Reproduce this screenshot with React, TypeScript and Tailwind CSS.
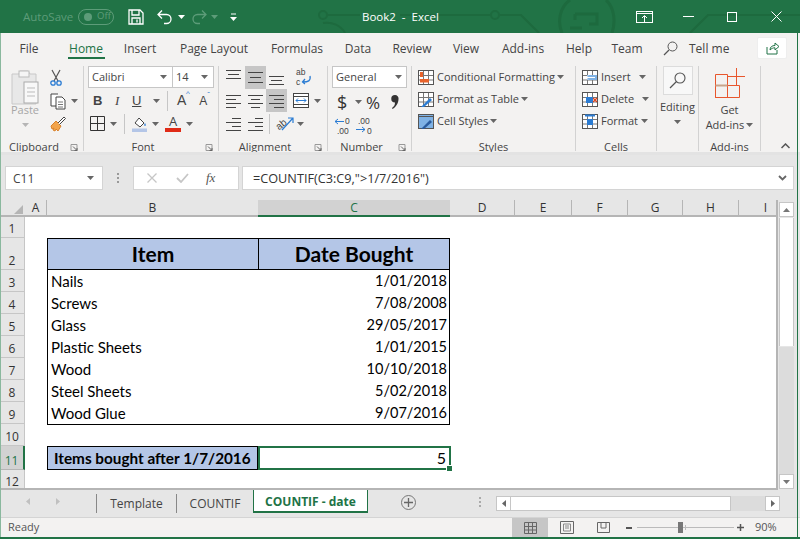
const tabs = [
    {label: "File", cls: "w-[56px]"},
    {label: "Home", cls: "w-[58px]"},
    {label: "Insert", cls: "w-[50px]"},
    {label: "Page Layout", cls: "w-[98px]"},
    {label: "Formulas", cls: "w-[68px]"},
    {label: "Data", cls: "w-[54px]"},
    {label: "Review", cls: "w-[54px]"},
    {label: "View", cls: "w-[54px]"},
    {label: "Add-ins", cls: "w-[60px]"},
    {label: "Help", cls: "w-[52px]"},
    {label: "Team", cls: "w-[44px]"},
];

const columns = [
    {label: "D", cls: "w-[65px]"},
    {label: "E", cls: "w-[57px]"},
    {label: "F", cls: "w-[56px]"},
    {label: "G", cls: "w-[55px]"},
    {label: "H", cls: "w-[56px]"},
];

const items = [
    {row: 3, name: "Nails", date: "1/01/2018"},
    {row: 4, name: "Screws", date: "7/08/2008"},
    {row: 5, name: "Glass", date: "29/05/2017"},
    {row: 6, name: "Plastic Sheets", date: "1/01/2015"},
    {row: 7, name: "Wood", date: "10/10/2018"},
    {row: 8, name: "Steel Sheets", date: "5/02/2018"},
    {row: 9, name: "Wood Glue", date: "9/07/2016"},
];

function Caret({color = "#666"}: { color?: string }) {
    return (
        <svg width="7" height="4" className="shrink-0">
            <path d="M0 0h7L3.5 4z" fill={color}/>
        </svg>
    );
}

function Launcher() {
    return (
        <svg width="16" height="9" className="shrink-0">
            <path d="M4 1.5h6v6M4 1.5v6h6" fill="none" stroke="#999"/>
            <path d="M6 3.5l4 4M7.5 7.5h2.5v-2.5" fill="none" stroke="#666"/>
        </svg>
    );
}

function Lines({y, box}: { y: number[][]; box?: boolean }) {
    return (
        <div className={`w-[21px] h-[23px] flex items-center justify-center ${box ? "bg-[#c6c6c6]" : ""}`}>
            <svg width="21" height="23">
                {y.map(([x1, x2, yy]) => (
                    <line key={`${x1}-${yy}`} x1={x1} x2={x2} y1={yy + 0.5} y2={yy + 0.5} stroke="#444"/>
                ))}
            </svg>
        </div>
    );
}

function Group({w, label, launcher, children}: {
    w: string;
    label: string;
    launcher?: boolean;
    children: React.ReactNode
}) {
    return (
        <div className={`${w} h-[85px] shrink-0 border-r border-[#d2d2d2] flex flex-col`}>
            <div className="h-[73px] shrink-0">{children}</div>
            <div className="flex items-center h-[16px]">
                <span className="flex-1 text-center text-[#444] whitespace-nowrap">{label}</span>
                {launcher && <Launcher/>}
            </div>
        </div>
    );
}

function StyleRow({icon, label, tail}: { icon: React.ReactNode; label: string; tail: string }) {
    return (
        <div className="flex items-center h-[22px]">
            {icon}
            <span className="ml-[3px] whitespace-nowrap">{label}</span>
            <span className={tail}><Caret/></span>
        </div>
    );
}

function GridIcon({children}: { children?: React.ReactNode }) {
    return (
        <svg width="16" height="15" className="shrink-0">
            <rect x="0.5" y="0.5" width="15" height="14" fill="#fff" stroke="#555"/>
            <path d="M5.5 1v13M10.5 1v13M1 5.5h14M1 10h14" stroke="#777"/>
            {children}
        </svg>
    );
}

function TitleBar() {
    return (
        <div className="relative h-[33px] shrink-0 bg-[#217346] flex items-center text-white overflow-hidden">
            <svg width="800" height="33" className="absolute left-0 top-0">
                <g fill="none" stroke="#1d6a3e" strokeWidth="2">
                    <circle cx="323" cy="15" r="4"/>
                    <path d="M327 15h33M345 33a20 18 0 0 0-22-10"/>
                    <circle cx="495" cy="15" r="4"/>
                    <path d="M400 15h91M499 15h22l18 18"/>
                    <path d="M562 33c-5-12-2-26 8-33M612 33c4-12 2-26-6-33" strokeWidth="3"/>
                    <path d="M575 14h22v10h-8M575 14v6M570 28h12" strokeWidth="3"/>
                    <path d="M690 33l18-18h92"/>
                </g>
            </svg>
            <span className="relative ml-[23px] pt-[1px] text-[11.5px] text-[#5d9c79] w-[55px]">AutoSave</span>
            <div
                className="relative w-[36px] h-[16px] rounded-full border border-[#5d9c79] flex items-center pl-[5px] text-[9.5px] text-[#5d9c79]">
                <span className="w-[8px] h-[8px] rounded-full bg-[#5d9c79] mr-[5px]"/>Off
            </div>
            <svg width="16" height="16" className="relative ml-[14px]">
                <path d="M1 1h11l3 3v11H1zM4 1v5h7V1M4 15v-6h8v6M9 10.5v3" fill="none" stroke="#fff"
                      strokeWidth="1.3"/>
            </svg>
            <svg width="16" height="16" className="relative ml-[13px]">
                <path d="M1.5 5.5h8a4.5 4.5 0 0 1 0 9H7M5 1.5l-4 4 4 4" fill="none" stroke="#fff" strokeWidth="1.3"/>
            </svg>
            <span className="relative ml-[5px]"><Caret color="#fff"/></span>
            <svg width="16" height="16" className="relative ml-[6px]">
                <path d="M14.5 5.5h-8a4.5 4.5 0 0 0 0 9H9M11 1.5l4 4-4 4" fill="none" stroke="#5d9c79"
                      strokeWidth="1.3"/>
            </svg>
            <span className="relative ml-[4px]"><Caret color="#5d9c79"/></span>
            <svg width="7" height="8" className="relative ml-[12px]">
                <path d="M1 1h5" stroke="#fff"/>
                <path d="M0 4h7L3.5 8z" fill="#fff"/>
            </svg>
            <span className="relative ml-[125px] w-[73px] text-[11.5px] whitespace-pre">Book2  -  Excel</span>
            <svg width="17" height="12" className="relative ml-[201px]">
                <rect x="0.5" y="0.5" width="16" height="11" fill="none" stroke="#fff"/>
                <path d="M1 2.5h15" stroke="#fff"/>
                <path d="M8.5 11V5M6 7l2.5-2.5L11 7" fill="none" stroke="#fff"/>
            </svg>
            <div className="relative ml-[30px] w-[11px] h-px bg-white"/>
            <div className="relative ml-[33px] w-[10px] h-[10px] border border-white"/>
            <svg width="11" height="11" className="relative ml-[34px]">
                <path d="M.5.5l10 10M10.5.5l-10 10" stroke="#fff"/>
            </svg>
        </div>
    );
}

function TabsRow() {
    return (
        <div className="h-[27px] shrink-0 flex items-center pl-px text-[12px] text-[#444]">
            {tabs.map(tab => (
                <div key={tab.label} className={`${tab.cls} relative h-full flex items-center justify-center`}>
                    <span className={`pt-[4px] ${tab.label === "Home" ? "text-[#217346]" : ""}`}>{tab.label}</span>
                    {tab.label === "Home" &&
                        <span className="absolute left-[11px] top-[24px] w-[37px] h-[2px] bg-[#217346]"/>}
                </div>
            ))}
            <svg width="15" height="15" className="ml-[14px] mt-[3px]">
                <circle cx="9.5" cy="5.5" r="4.5" fill="none" stroke="#555"/>
                <path d="M6 9l-5 5" stroke="#555" strokeWidth="1.2"/>
            </svg>
            <span className="ml-[11px] w-[40px] pt-[4px] whitespace-nowrap">Tell me</span>
            <div
                className="ml-[28px] mt-[3px] w-[30px] h-[22px] bg-white rounded-[2px] border border-[#eee] flex items-center justify-center">
                <svg width="13" height="13">
                    <path d="M1 5v7h10V8" fill="none" stroke="#217346"/>
                    <path d="M4 8c0-3 2-4.500 5-4.500V1l4 3.500L9 8V5.800c-2 0-3.500.7-5 2.200z" fill="none" stroke="#217346"/>
                </svg>
            </div>
        </div>
    );
}

function Ribbon() {
    return (
        <div className="h-[95px] shrink-0 pt-[6px] pl-px flex text-[11px] text-[#444] relative">
            <Group w="w-[83px]" label="Clipboard" launcher>
                <div className="flex">
                    <div className="w-[47px] flex flex-col items-center text-[#a6a6a6] pl-[1px]">
                        <svg width="28" height="36" className="mt-[3px]">
                            <path d="M1 5h7l1-3h8l2 3h6v30H1z" fill="#e8e8e8" stroke="#c8c8c8"/>
                            <rect x="8" y="2" width="10" height="6" fill="#f5f5f5" stroke="#bbb"/>
                            <rect x="13" y="13" width="14" height="21" fill="#f8f8f8" stroke="#aaa"/>
                            <path d="M16 19h8M16 23h8M16 27h8" stroke="#bbb"/>
                        </svg>
                        <span className="mt-[-3px] leading-[16px]">Paste</span>
                        <span className="mt-[5px]"><Caret color="#b5b5b5"/></span>
                    </div>
                    <div className="flex flex-col pl-[2px]">
                        <div className="h-[23px] flex items-center">
                            <svg width="12" height="17">
                                <path d="M2 1l6 11M10 1L4 12" stroke="#555" strokeWidth="1.2"/>
                                <circle cx="3" cy="14" r="2.200" fill="none" stroke="#2b7cd3" strokeWidth="1.3"/>
                                <circle cx="9" cy="14" r="2.200" fill="none" stroke="#2b7cd3" strokeWidth="1.3"/>
                            </svg>
                        </div>
                        <div className="h-[24px] flex items-center">
                            <svg width="16" height="17">
                                <path d="M8 1H1v12h5" fill="#fff" stroke="#444"/>
                                <path d="M6 4h6l3 3v9H6z" fill="#fff" stroke="#444"/>
                                <path d="M8 9h5M8 11.500h5M8 14h5" stroke="#777"/>
                            </svg>
                            <span className="ml-[5px]"><Caret/></span>
                        </div>
                        <div className="h-[22px] flex items-center">
                            <svg width="16" height="16">
                                <path d="M1 10l5-5 5 5-3 5-2-2-1 2-2-1 1-2-2 1z" fill="#f2a44b" stroke="#d9822b"/>
                                <path d="M8 7l6-6 1.500 1.500-6 6" fill="#fff" stroke="#444"/>
                            </svg>
                        </div>
                    </div>
                </div>
            </Group>

            <Group w="w-[135px]" label="Font" launcher>
                <div className="pl-[4px] h-[23px] flex">
                    <div
                        className="w-[85px] h-[22px] bg-white border border-[#c6c6c6] flex items-center justify-between pl-[3px] pr-[5px]">
                        <span>Calibri</span><Caret/>
                    </div>
                    <div
                        className="w-[41px] h-[22px] bg-white border border-l-0 border-[#c6c6c6] flex items-center justify-between pl-[3px] pr-[5px]">
                        <span>14</span><Caret/>
                    </div>
                </div>
                <div className="pl-[9px] h-[23px] flex items-center font-['Liberation_Sans',sans-serif] text-[13px]">
                    <span className="w-[10px] font-bold">B</span>
                    <span className="w-[12px] ml-[12px] italic font-['Liberation_Serif',serif]">I</span>
                    <span className="w-[12px] ml-[5px] underline">U</span>
                    <span className="ml-[9px]"><Caret/></span>
                    <span className="ml-[7px] w-px h-[20px] bg-[#c6c6c6]"/>
                    <span className="ml-[9px] text-[14px] relative">A<span
                        className="absolute text-[#2b7cd3] text-[8px] top-[-2px] left-[9px]">^</span></span>
                    <span className="ml-[13px] text-[12px] relative">A<span
                        className="absolute text-[#2b7cd3] text-[8px] top-[-3px] left-[8px]">ˇ</span></span>
                </div>
                <div className="pl-[6px] h-[23px] flex items-center">
                    <svg width="15" height="15">
                        <path d="M.5.500h14v14H.5zM7.500 1v13M1 7.500h13" fill="none" stroke="#333"/>
                    </svg>
                    <span className="ml-[5px]"><Caret/></span>
                    <span className="ml-[7px] w-px h-[20px] bg-[#c6c6c6]"/>
                    <svg width="16" height="16" className="ml-[7px]">
                        <path d="M3 7l4-5 5 5-4 4z" fill="#fff" stroke="#444"/>
                        <path d="M13 7c1 1 1 3 0 3s-1-2 0-3z" fill="#2b7cd3"/>
                        <rect x="0" y="12.500" width="15" height="3.500" fill="#b4c6e7"/>
                    </svg>
                    <span className="ml-[4px]"><Caret/></span>
                    <div className="ml-[6px] w-[16px] flex flex-col items-center">
                        <span className="text-[13px] leading-[13px]">A</span>
                        <span className="w-[16px] h-[4px] bg-[#e02b17]"/>
                    </div>
                    <span className="ml-[5px]"><Caret/></span>
                </div>
            </Group>

            <Group w="w-[109px]" label="Alignment" launcher>
                <div className="pl-[5px] flex h-[23px]">
                    <Lines y={[[2, 17, 4], [4, 15, 8], [2, 17, 12]]}/>
                    <Lines box y={[[3, 18, 6], [5, 16, 11], [3, 18, 16]]}/>
                    <Lines y={[[3, 18, 10], [5, 16, 14], [3, 18, 18]]}/>
                    <svg width="17" height="18" className="ml-[8px] mt-[2px] overflow-visible">
                        <text x="1" y="7" fontSize="8.500" fill="#444" fontFamily="Liberation Sans">ab</text>
                        <text x="1" y="16.500" fontSize="8.500" fill="#444" fontFamily="Liberation Sans">c</text>
                        <path d="M15 8c1 5-2 6-7 6M10 11l-2.500 3 2.500 2" fill="none" stroke="#2b7cd3" strokeWidth="1.300"/>
                    </svg>
                </div>
                <div className="pl-[5px] flex h-[23px]">
                    <Lines y={[[2, 17, 6], [2, 12, 10], [2, 17, 14], [2, 12, 18]]}/>
                    <Lines y={[[3, 18, 6], [6, 15, 10], [3, 18, 14], [6, 15, 18]]}/>
                    <Lines box y={[[3, 18, 6], [8, 18, 10], [3, 18, 14], [8, 18, 18]]}/>
                    <svg width="16" height="15" className="ml-[6px] mt-[4px]">
                        <rect x="0.500" y="0.500" width="15" height="14" fill="#fff" stroke="#444"/>
                        <path d="M1 3.500h14M1 11.500h14" stroke="#444"/>
                        <path d="M3 7.500h10M5 5.500l-2 2 2 2M11 5.500l2 2-2 2" fill="none" stroke="#2b7cd3"/>
                    </svg>
                    <span className="ml-[5px] mt-[10px]"><Caret/></span>
                </div>
                <div className="pl-[5px] flex h-[23px] items-center">
                    <Lines y={[[8, 17, 6], [2, 17, 10], [8, 17, 14], [2, 17, 18]]}/>
                    <Lines y={[[10, 18, 6], [3, 18, 10], [10, 18, 14], [3, 18, 18]]}/>
                    <span className="ml-[3px] w-px h-[20px] bg-[#c6c6c6]"/>
                    <svg width="19" height="17" className="ml-[6px] overflow-visible">
                        <text x="0" y="13" fontSize="10" fill="#444" fontFamily="Liberation Sans"
                              transform="rotate(-40 5 10)">ab</text>
                        <path d="M6 15L17 3M12 3h5v5" fill="none" stroke="#2b7cd3" strokeWidth="1.200"/>
                    </svg>
                    <span className="ml-[2px]"><Caret/></span>
                </div>
            </Group>

            <Group w="w-[84px]" label="Number" launcher>
                <div className="pl-[4px] h-[23px]">
                    <div
                        className="w-[75px] h-[22px] bg-white border border-[#c6c6c6] flex items-center justify-between pl-[3px] pr-[4px]">
                        <span>General</span><Caret/>
                    </div>
                </div>
                <div className="pl-[9px] h-[26px] flex items-center text-[#333]">
                    <span className="w-[11px] text-[18px] leading-none">$</span>
                    <span className="ml-[7px]"><Caret/></span>
                    <span className="ml-[4px] text-[17px] w-[16px] leading-none">%</span>
                    <svg width="8" height="15" className="ml-[9px]">
                        <path d="M4 0a3.500 3.500 0 0 1 3.500 4c0 4-2.500 8-6 10l-.5-1c2-1.500 3-3 3-5.500A3.500 3.500 0 0 1 4 0z"
                              fill="#333"/>
                    </svg>
                </div>
                <div className="pl-[6px] h-[20px] flex items-center">
                    <svg width="19" height="17" className="overflow-visible">
                        <path d="M10 4.500H1M4 2L1 4.500 4 7" fill="none" stroke="#2b7cd3"/>
                        <text x="11" y="7" fontSize="8.500" fill="#444" fontFamily="Liberation Sans">0</text>
                        <text x="3" y="16.500" fontSize="8.500" fill="#444" fontFamily="Liberation Sans">.00</text>
                    </svg>
                    <svg width="19" height="17" className="ml-[2px] overflow-visible">
                        <text x="3" y="7" fontSize="8.500" fill="#444" fontFamily="Liberation Sans">.00</text>
                        <path d="M1 12.500h9M7 10l3 2.500L7 15" fill="none" stroke="#2b7cd3"/>
                        <text x="12" y="16.500" fontSize="8.500" fill="#444" fontFamily="Liberation Sans">0</text>
                    </svg>
                </div>
            </Group>

            <Group w="w-[164px]" label="Styles">
                <div className="pl-[6px]">
                    <StyleRow label="Conditional Formatting" tail="ml-[2px]" icon={
                        <GridIcon>
                            <rect x="2" y="2" width="3" height="5" fill="#e8632b"/>
                            <rect x="2" y="9" width="9" height="3.500" fill="#e8632b"/>
                        </GridIcon>
                    }/>
                    <StyleRow label="Format as Table" tail="ml-[2px]" icon={
                        <GridIcon>
                            <path d="M3 15L12 6l2 2-8 7z" fill="#2b7cd3"/>
                        </GridIcon>
                    }/>
                    <StyleRow label="Cell Styles" tail="ml-[2px]" icon={
                        <svg width="16" height="15" className="shrink-0">
                            <rect x="0.500" y="0.500" width="15" height="14" fill="#7fb2e5" stroke="#555"/>
                            <path d="M3 15L12 6l2 2-8 7z" fill="#2b5c9e"/>
                            <path d="M1 2.500h14" stroke="#555"/>
                        </svg>
                    }/>
                </div>
            </Group>

            <Group w="w-[81px]" label="Cells">
                <div className="pl-[6px]">
                    <StyleRow label="Insert" tail="ml-[8px]" icon={
                        <GridIcon>
                            <rect x="5" y="5" width="10" height="5" fill="#7fb2e5"/>
                            <path d="M13 7.500H4M6 5.500l-2 2 2 2" fill="none" stroke="#fff"/>
                        </GridIcon>
                    }/>
                    <StyleRow label="Delete" tail="ml-[8px]" icon={
                        <GridIcon>
                            <rect x="4" y="5" width="7" height="6" fill="#2b7cd3"/>
                            <path d="M11 6l4 4M15 6l-4 4" stroke="#e0431b" strokeWidth="1.300"/>
                        </GridIcon>
                    }/>
                    <StyleRow label="Format" tail="ml-[3px]" icon={
                        <GridIcon>
                            <rect x="5" y="5" width="6" height="6" fill="#2b7cd3"/>
                            <path d="M3 1.500h10" stroke="#2b7cd3" strokeWidth="2"/>
                        </GridIcon>
                    }/>
                </div>
            </Group>

            <Group w="w-[42px]" label="">
                <div className="flex flex-col items-center">
                    <div className="w-[30px] h-[29px] bg-[#f8f8f8] border border-[#dcdcdc] flex items-center justify-center">
                        <svg width="17" height="17">
                            <circle cx="11" cy="6" r="5" fill="none" stroke="#555" strokeWidth="1.100"/>
                            <path d="M7.500 9.500L1 16" stroke="#555" strokeWidth="1.300"/>
                        </svg>
                    </div>
                    <span className="mt-[4px] leading-[16px]">Editing</span>
                    <span className="mt-[5px]"><Caret/></span>
                </div>
            </Group>

            <Group w="w-[62px]" label="Add-ins">
                <div className="flex flex-col items-center">
                    <svg width="31" height="30" className="mt-[2px]">
                        <path d="M1.500 6.500h12v23h-12zM1.500 17.500h24v12h-24zM13.500 17.500v12" fill="none" stroke="#e8562c"/>
                        <path d="M1.500 17.500h12" stroke="#c8a48a" strokeWidth="2"/>
                        <path d="M22.500 0v17M14 8.500h17" stroke="#e8562c"/>
                    </svg>
                    <div className="mt-[4px] h-[15px] leading-[15px]">Get</div>
                    <div className="h-[15px] leading-[15px] flex items-center gap-[2px]">Add-ins<Caret/></div>
                </div>
            </Group>

            <div className="flex-1 flex items-end justify-end pr-[10px] pb-[6px]">
                <svg width="9" height="6">
                    <path d="M.5 5L4.500 1l4 4" fill="none" stroke="#555" strokeWidth="1.500"/>
                </svg>
            </div>
            <div className="absolute left-0 right-0 bottom-0 h-[3px] bg-[#e3e3e3]"/>
        </div>
    );
}

function FormulaBar() {
    return (
        <div className="h-[45px] shrink-0 bg-[#e6e6e6] flex items-start pt-[11px] pl-[5px] text-[#444]">
            <div
                className="w-[98px] h-[24px] bg-white border border-[#d4d4d4] flex items-center justify-between pl-[7px] pr-[8px] text-[12px]">
                <span className="pt-px">C11</span><Caret/>
            </div>
            <div className="w-[30px] h-[24px] flex flex-col items-center justify-center gap-[2px]">
                <span className="w-[2px] h-[2px] bg-[#999]"/>
                <span className="w-[2px] h-[2px] bg-[#999]"/>
                <span className="w-[2px] h-[2px] bg-[#999]"/>
            </div>
            <div className="w-[106px] h-[24px] bg-white border border-[#d4d4d4] flex items-center pl-[13px]">
                <svg width="10" height="10">
                    <path d="M.5.500l9 9M9.500.500l-9 9" stroke="#c6c6c6" strokeWidth="1.300"/>
                </svg>
                <svg width="13" height="10" className="ml-[19px]">
                    <path d="M1 5l4 4 7-8" fill="none" stroke="#c6c6c6" strokeWidth="1.800"/>
                </svg>
                <span
                    className="ml-[17px] text-[13px] italic font-['Liberation_Serif',serif] text-[#555]">fx</span>
            </div>
            <div
                className="ml-[3px] w-[552px] h-[24px] bg-white border border-[#d4d4d4] flex items-center justify-between pl-[10px] pr-[6px] text-[12.7px] text-[#333]">
                <span className="pt-px">=COUNTIF(C3:C9,"&gt;1/7/2016")</span>
                <svg width="9" height="6">
                    <path d="M1 1l3.500 3.500L8 1" fill="none" stroke="#666" strokeWidth="1.800"/>
                </svg>
            </div>
        </div>
    );
}

function RowHead({n, h, active}: { n: number; h: string; active?: boolean }) {
    return (
        <div
            className={`w-[25px] shrink-0 ${h} flex items-end justify-center pb-[1px] border-b border-r text-[12px] leading-[14px] ${active ? "bg-[#d2d2d2] border-[#b5b5b5] border-r-[#217346] border-r-2 text-[#217346]" : "bg-[#e6e6e6] border-[#c6c6c6] text-[#333]"}`}>
            {n}
        </div>
    );
}

function Sheet() {
    const cell = "font-['Lato',sans-serif] text-black";
    return (
        <div className="flex-1 min-h-0 bg-[#e6e6e6] flex">
            <div className="w-[778px] shrink-0 flex flex-col border-r-2 border-b-2 border-[#b5b5b5] overflow-hidden">
                {/* Column headers */}
                <div className="h-[17px] shrink-0 flex text-[12px] text-[#333] border-b-2 border-[#b5b5b5]">
                    <div className="w-[25px] flex items-end justify-end pr-[2px] pb-[1px]">
                        <svg width="9" height="9"><path d="M9 0v9H0z" fill="#b5b5b5"/></svg>
                    </div>
                    <div className="w-[22px] flex items-center justify-center border-r border-[#b5b5b5]">A</div>
                    <div className="w-[211px] flex items-center justify-center">B</div>
                    <div
                        className="w-[192px] flex items-center justify-center bg-[#d2d2d2] text-[#217346] border-b-2 border-[#217346] h-[17px]">C
                    </div>
                    {columns.map(col => (
                        <div key={col.label}
                             className={`${col.cls} flex items-center justify-center border-r border-[#b5b5b5]`}>{col.label}</div>
                    ))}
                    <div className="flex-1 flex items-center justify-end pr-[9px]">I</div>
                </div>

                {/* Rows */}
                <div className="bg-white flex-1 flex flex-col">
                    <div className="flex h-[21px]"><RowHead n={1} h="h-[21px]"/></div>
                    <div className="flex h-[32px]">
                        <RowHead n={2} h="h-[32px]"/>
                        <div className="w-[22px]"/>
                        <div
                            className={`w-[212px] border border-black bg-[#b4c6e7] flex items-center justify-center font-bold ${cell} text-[21px]`}>Item
                        </div>
                        <div
                            className={`w-[191px] border border-l-0 border-black bg-[#b4c6e7] flex items-center justify-center font-bold ${cell} text-[21px]`}>Date
                            Bought
                        </div>
                    </div>
                    {items.map(item => (
                        <div key={item.row} className="flex h-[22px]">
                            <RowHead n={item.row} h="h-[22px]"/>
                            <div className="w-[22px]"/>
                            <div
                                className={`w-[212px] h-[22px] border-l border-black pl-[3px] text-[15px] leading-[22px] ${cell}`}>{item.name}</div>
                            <div
                                className={`w-[191px] h-[22px] border-r border-black pr-[2px] text-right text-[14.5px] leading-[22px] ${cell}`}>{item.date}</div>
                        </div>
                    ))}
                    <div className="flex h-[22px]">
                        <RowHead n={10} h="h-[22px]"/>
                        <div className="w-[22px]"/>
                        <div className="w-[403px] h-px bg-black"/>
                    </div>
                    <div className="flex h-[24px]">
                        <RowHead n={11} h="h-[24px]" active/>
                        <div className="w-[22px]"/>
                        <div
                            className={`w-[211px] border border-black bg-[#b4c6e7] pl-[6px] text-[15.3px] leading-[22px] font-bold whitespace-nowrap ${cell}`}>Items
                            bought after 1/7/2016
                        </div>
                        <div
                            className={`relative w-[193px] border-2 border-[#217346] pr-[3px] text-right leading-[20px] ${cell} text-[16px]`}>
                            5
                            <span
                                className="absolute right-[-4px] bottom-[-4px] w-[5px] h-[5px] bg-[#217346] border border-white box-content"/>
                        </div>
                    </div>
                    <div className="flex flex-1"><RowHead n={12} h="h-[21px]"/></div>
                </div>
            </div>

            {/* Vertical scrollbar */}
            <div className="w-[15px] ml-[1px] mr-[4px] flex flex-col justify-between pb-[1px] bg-[#e6e6e6]">
                <div
                    className="h-[15px] mt-[2px] bg-white border border-[#c6c6c6] flex items-center justify-center">
                    <svg width="7" height="4"><path d="M0 4h7L3.500 0z" fill="#777"/></svg>
                </div>
                <div className="flex-1 bg-white border-x border-[#c6c6c6] mt-[1px] mb-[1px] h-[240px] max-h-[242px]"/>
                <div className="flex-1 bg-[#dcdcdc]"/>
                <div
                    className="h-[15px] bg-white border border-[#c6c6c6] flex items-center justify-center">
                    <Caret color="#777"/>
                </div>
            </div>
        </div>
    );
}

function SheetTabs() {
    return (
        <div className="h-[27px] shrink-0 bg-[#e6e6e6] flex items-start text-[12px] text-[#444]">
            <div className="w-[96px] h-[23px] flex items-center pl-[26px] gap-[26px]">
                <svg width="4" height="7"><path d="M4 0v7L0 3.500z" fill="#c0c0c0"/></svg>
                <svg width="4" height="7"><path d="M0 0v7l4-3.500z" fill="#c0c0c0"/></svg>
            </div>
            <div className="w-[80px] h-[19px] mt-[4px] border-l border-[#888] flex items-center justify-center">Template</div>
            <div className="w-[77px] h-[19px] mt-[4px] border-l border-[#888] flex items-center justify-center">COUNTIF</div>
            <div
                className="w-[115px] h-[23px] pt-[3px] bg-white border-x border-b-2 border-[#217346] border-t-0 flex items-center justify-center font-bold text-[#217346]">COUNTIF
                - date
            </div>
            <div className="w-[33px]"/>
            <div className="w-[15px] h-[15px] mt-[5px] rounded-full border border-[#777] flex items-center justify-center">
                <svg width="9" height="9"><path d="M4.500 0v9M0 4.500h9" stroke="#666" strokeWidth="1.300"/></svg>
            </div>
            <div className="ml-[63px] h-[23px] w-[2px] flex flex-col items-center justify-center gap-[2px]">
                <span className="w-[2px] h-[2px] bg-[#aaa]"/>
                <span className="w-[2px] h-[2px] bg-[#aaa]"/>
                <span className="w-[2px] h-[2px] bg-[#aaa]"/>
            </div>
            <div className="ml-[15px] mt-[6px] w-[284px] h-[15px] flex">
                <div className="w-[15px] bg-white border border-[#c6c6c6] flex items-center justify-center">
                    <svg width="4" height="7"><path d="M4 0v7L0 3.500z" fill="#666"/></svg>
                </div>
                <div className="w-[220px] bg-white border-y border-r border-[#c6c6c6]"/>
                <div className="w-[34px] bg-[#dcdcdc]"/>
                <div className="w-[15px] bg-white border border-[#c6c6c6] flex items-center justify-center">
                    <svg width="4" height="7"><path d="M0 0v7l4-3.500z" fill="#666"/></svg>
                </div>
            </div>
        </div>
    );
}

function StatusBar() {
    return (
        <div className="h-[20px] shrink-0 border-t border-[#d4d4d4] flex items-center text-[11px] text-[#555]">
            <span className="ml-[8px] w-[30px]">Ready</span>
            <div className="ml-[474px] w-[36px] h-full bg-[#c6c6c6] flex items-center justify-center">
                <svg width="13" height="12">
                    <path d="M.5.500h12v11H.5zM4.500 1v10M8.500 1v10M1 4.500h11M1 8h11" fill="none" stroke="#666"/>
                </svg>
            </div>
            <svg width="14" height="13" className="ml-[12px]">
                <path d="M.5.500h13v12H.5z" fill="none" stroke="#666"/>
                <path d="M3.500 3h7v7h-7zM5 5h4M5 7h4" fill="none" stroke="#888"/>
            </svg>
            <svg width="13" height="11" className="ml-[23px]">
                <path d="M.5.500h12v10H.5zM4 1v5h5V1" fill="none" stroke="#666"/>
            </svg>
            <div className="ml-[16px] w-[6px] h-[2px] bg-[#555]"/>
            <div className="ml-[5px] w-[97px] h-px bg-[#bbb] relative">
                <span className="absolute left-[41px] top-[-5px] w-[5px] h-[11px] bg-[#777]"/>
                <span className="absolute left-[48px] top-[-2px] w-px h-[5px] bg-[#bbb]"/>
            </div>
            <svg width="7" height="7" className="ml-[3px]">
                <path d="M3.500 0v7M0 3.500h7" stroke="#555" strokeWidth="1.500"/>
            </svg>
            <span className="ml-[11px]">90%</span>
        </div>
    );
}

export default function App() {
    return (
        <div
            className="w-[800px] h-[539px] overflow-hidden bg-[#f3f2f1] flex flex-col border-b-2 border-[#217346] relative font-['Open_Sans',sans-serif]">
            <TitleBar/>
            <TabsRow/>
            <Ribbon/>
            <FormulaBar/>
            <Sheet/>
            <SheetTabs/>
            <StatusBar/>
            <div className="absolute left-0 top-[33px] bottom-0 w-px bg-[#8ab89e]"/>
            <div className="absolute right-[2px] top-[33px] bottom-0 w-px bg-[#217346]"/>
        </div>
    );
}
